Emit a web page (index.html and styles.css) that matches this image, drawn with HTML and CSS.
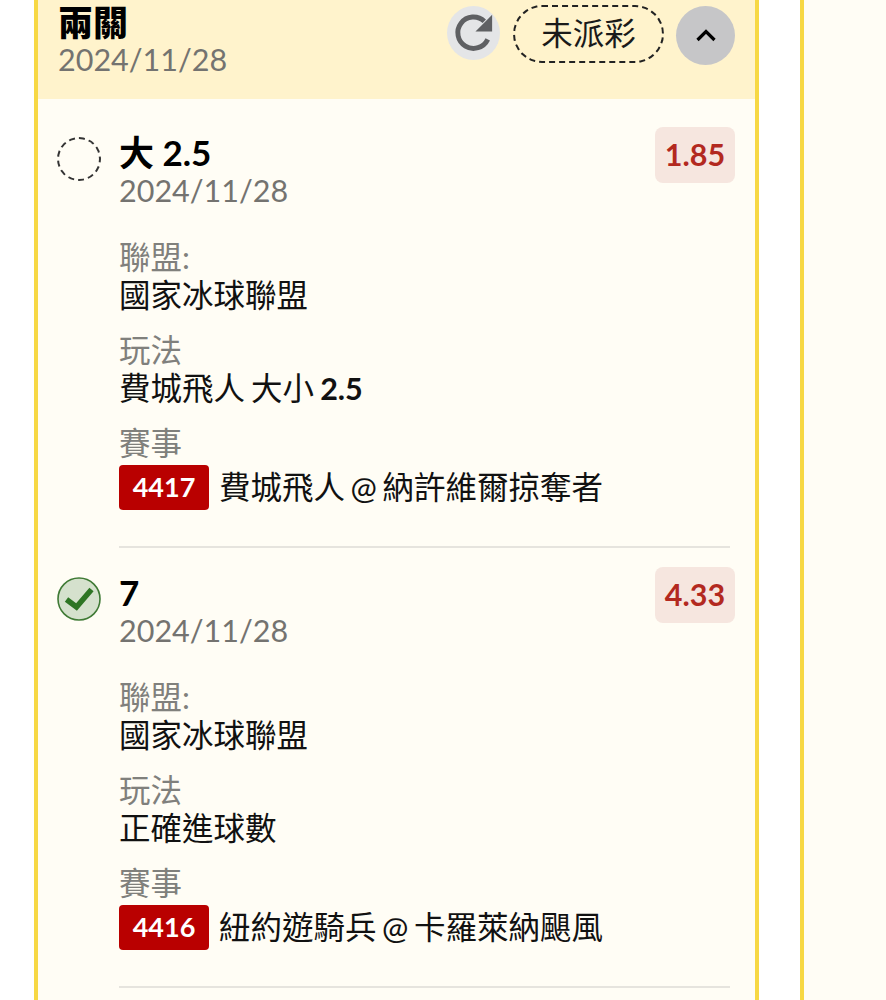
FILE: index.html
```html
<!DOCTYPE html>
<html lang="zh-Hant">
<head>
    <meta charset="UTF-8">
    <meta name="viewport" content="width=device-width, initial-scale=1.0">
    <title>兩關</title>
    <link rel="stylesheet" href="styles.css">
</head>
<body>
    <div class="page">
        <div class="card">
            <div class="card-header">
                <div class="header-text">
                    <div class="header-title">兩關</div>
                    <div class="date">2024/11/28</div>
                </div>
                <div class="header-actions">
                    <button class="refresh-btn" aria-label="refresh">
                        <svg viewBox="0 0 54 54" width="53" height="53">
                            <path d="M41.5 33a16 16 0 1 1-3.5-18.5" fill="none" stroke="#5f6063" stroke-width="5"/>
                            <path d="M46 8v17H29z" fill="#5f6063"/>
                        </svg>
                    </button>
                    <div class="status-pill">未派彩</div>
                    <button class="collapse-btn" aria-label="collapse">
                        <svg viewBox="0 0 24 24" width="24" height="24">
                            <path d="M3.5 16 12 7.5l8.5 8.5" fill="none" stroke="#000" stroke-width="3.2"/>
                        </svg>
                    </button>
                </div>
            </div>

            <div class="bet">
                <div class="bet-icon pending"></div>
                <div class="bet-body">
                    <div class="bet-top">
                        <div class="bet-head">
                            <div class="bet-title">大 2.5</div>
                            <div class="date">2024/11/28</div>
                        </div>
                        <div class="odds">1.85</div>
                    </div>
                    <div class="field-label first">聯盟:</div>
                    <div class="field-value">國家冰球聯盟</div>
                    <div class="field-label">玩法</div>
                    <div class="field-value">費城飛人 大小 <b>2.5</b></div>
                    <div class="field-label">賽事</div>
                    <div class="match">
                        <span class="match-no">4417</span>
                        <span class="field-value">費城飛人 @ 納許維爾掠奪者</span>
                    </div>
                </div>
            </div>

            <div class="bet">
                <div class="bet-icon won">
                    <svg viewBox="0 0 44 44" width="44" height="44">
                        <circle cx="22" cy="22" r="21" fill="#d5e1cd" stroke="#3f7a35" stroke-width="1.6"/>
                        <path d="M9.5 22.5 19.5 30 34.5 12.5" fill="none" stroke="#2e7524" stroke-width="5.5"/>
                    </svg>
                </div>
                <div class="bet-body">
                    <div class="bet-top">
                        <div class="bet-head">
                            <div class="bet-title">7</div>
                            <div class="date">2024/11/28</div>
                        </div>
                        <div class="odds">4.33</div>
                    </div>
                    <div class="field-label first">聯盟:</div>
                    <div class="field-value">國家冰球聯盟</div>
                    <div class="field-label">玩法</div>
                    <div class="field-value">正確進球數</div>
                    <div class="field-label">賽事</div>
                    <div class="match">
                        <span class="match-no">4416</span>
                        <span class="field-value">紐約遊騎兵 @ 卡羅萊納颶風</span>
                    </div>
                </div>
            </div>
        </div>
        <div class="card-next"></div>
    </div>
</body>
</html>
```

FILE: styles.css
```css
html, body {
    margin: 0;
    padding: 0;
    height: 1000px;
    overflow: hidden;
    background-color: #fff;
}

body {
    font-family: Lato, "Noto Sans CJK TC", sans-serif;
    color: #111;
}

.page {
    display: flex;
    gap: 41px;
    padding-left: 34px;
    height: 1000px;
}

.card {
    width: 717px;
    flex-shrink: 0;
    border-left: 4px solid #f7d844;
    border-right: 4px solid #f7d844;
    background-color: #fffdf5;
}

.card-next {
    flex: 1;
    border-left: 4px solid #f7d844;
    background-color: #fffdf5;
}

.card-header {
    display: flex;
    justify-content: space-between;
    align-items: flex-start;
    height: 99px;
    box-sizing: border-box;
    padding: 0 20px;
    background-color: #fff3cc;
}

.header-title {
    font-size: 35px;
    font-weight: 900;
    line-height: 44px;
    color: #000;
}

.date {
    font-size: 30.5px;
    line-height: 36px;
    color: #747370;
}

.card-header .date {
    margin-top: -3px;
}

.header-actions {
    display: flex;
    align-items: flex-start;
    gap: 12px;
    padding-top: 5px;
}

.refresh-btn, .collapse-btn {
    display: flex;
    align-items: center;
    justify-content: center;
    padding: 0;
    border: none;
    border-radius: 50%;
}

.refresh-btn {
    width: 53px;
    height: 54px;
    margin: 1px 1px 0 0;
    background-color: #e4e5e7;
}

.collapse-btn {
    width: 59px;
    height: 59px;
    margin-top: 1px;
    background-color: #c6c6c8;
}

.status-pill {
    width: 151px;
    height: 58px;
    box-sizing: border-box;
    border: 2px dashed #222;
    border-radius: 29px;
    font-size: 31.5px;
    line-height: 53px;
    text-align: center;
    color: #1a1a1a;
}

.bet {
    display: flex;
    gap: 18px;
    padding: 28px 20px 0 19px;
}

.bet + .bet {
    padding-top: 0;
}

.bet-icon {
    width: 44px;
    height: 44px;
    margin-top: 10px;
    flex-shrink: 0;
}

.bet-icon.pending {
    box-sizing: border-box;
    border: 2px dashed #333;
    border-radius: 50%;
}

.bet-body {
    flex: 1;
    border-bottom: 2px solid #e6e4de;
    padding-bottom: 36px;
    margin-bottom: 19px;
    margin-right: 5px;
}

.bet-top {
    display: flex;
    justify-content: space-between;
    align-items: flex-start;
    margin-right: -5px;
}

.bet-head {
    padding-top: 3px;
}

.bet-title {
    font-size: 35px;
    font-weight: 700;
    line-height: 44px;
    color: #000;
}

.bet-top .date {
    margin-top: -2px;
}

.odds {
    width: 80px;
    height: 56px;
    border-radius: 8px;
    background-color: #f6e6df;
    color: #b3291f;
    font-size: 30.5px;
    font-weight: 700;
    line-height: 55px;
    text-align: center;
}

.field-label {
    margin-top: 17px;
    font-size: 31.5px;
    line-height: 38px;
    color: #80807c;
}

.field-label.first {
    margin-top: 30px;
}

.field-value {
    font-size: 31.5px;
    line-height: 38px;
    word-spacing: -2px;
    color: #111;
}

.field-value b {
    font-size: 30.5px;
    font-weight: 700;
}

.match {
    display: flex;
    align-items: center;
    gap: 10px;
    margin-top: 3px;
}

.match .field-value {
    margin-top: -2px;
    word-spacing: -2.5px;
}

.match-no {
    width: 90px;
    height: 45px;
    border-radius: 4px;
    background-color: #b90000;
    color: #fff;
    font-size: 27px;
    font-weight: 700;
    line-height: 44px;
    text-align: center;
}
```
